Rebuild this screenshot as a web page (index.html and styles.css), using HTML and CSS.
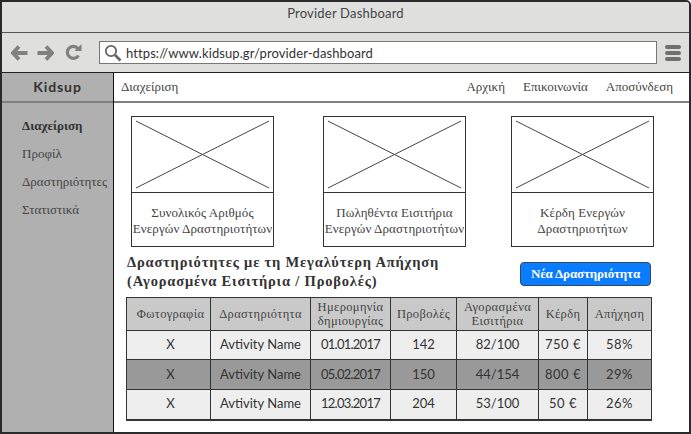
FILE: index.html
```html
<!DOCTYPE html>
<html lang="el">
<head>
<meta charset="utf-8">
<title>Provider Dashboard</title>
<link rel="stylesheet" href="styles.css">
</head>
<body>
<div class="frame">
  <div class="titlebar">Provider Dashboard</div>
  <div class="toolbar">
    <svg class="nav-icon back" width="17" height="16" viewBox="0 0 17 16"><path d="M8 1.500 2 8 8 14.500" fill="none" stroke="#808080" stroke-width="3.800"/><path d="M3 8H16.500" fill="none" stroke="#808080" stroke-width="4"/></svg>
    <svg class="nav-icon fwd" width="17" height="16" viewBox="0 0 17 16"><path d="M9 1.500 15 8 9 14.500" fill="none" stroke="#808080" stroke-width="3.800"/><path d="M14 8H.5" fill="none" stroke="#808080" stroke-width="4"/></svg>
    <svg class="nav-icon reload" width="17" height="17" viewBox="0 0 17 17"><path d="M13.500 11.500A6 6 0 1 1 13 4.500" fill="none" stroke="#808080" stroke-width="3.200"/><path d="M9.500 7H16.500V0Z" fill="#808080"/></svg>
    <div class="urlbar">
      <svg class="search" width="18" height="18" viewBox="0 0 18 18"><circle cx="7" cy="7" r="5.200" fill="none" stroke="#666" stroke-width="1.800"/><path d="M11 11 16.500 16.500" stroke="#666" stroke-width="2.600"/></svg>
      <span class="url">https://www.kidsup.gr/provider-dashboard</span>
    </div>
    <div class="burger"><i></i><i></i><i></i></div>
  </div>
  <div class="app">
    <aside class="sidebar">
      <div class="brand">Kidsup</div>
      <ul class="side-menu">
        <li class="active">Διαχείριση</li>
        <li>Προφίλ</li>
        <li>Δραστηριότητες</li>
        <li>Στατιστικά</li>
      </ul>
    </aside>
    <main class="main">
      <nav class="topnav">
        <span class="topnav-title">Διαχείριση</span>
        <span class="topnav-links"><a>Αρχική</a><a>Επικοινωνία</a><a>Αποσύνδεση</a></span>
      </nav>
      <section class="cards">
        <article class="card">
          <svg class="ph" viewBox="0 0 142 75" preserveAspectRatio="none"><path d="M4 4 138 71M138 4 4 71" stroke="#444" stroke-width="1" fill="none"/></svg>
          <p>Συνολικός Αριθμός<br>Ενεργών Δραστηριοτήτων</p>
        </article>
        <article class="card card-second">
          <svg class="ph" viewBox="0 0 142 75" preserveAspectRatio="none"><path d="M4 4 138 71M138 4 4 71" stroke="#444" stroke-width="1" fill="none"/></svg>
          <p>Πωληθέντα Εισιτήρια<br>Ενεργών Δραστηριοτήτων</p>
        </article>
        <article class="card card-third">
          <svg class="ph" viewBox="0 0 142 75" preserveAspectRatio="none"><path d="M4 4 138 71M138 4 4 71" stroke="#444" stroke-width="1" fill="none"/></svg>
          <p>Κέρδη Ενεργών<br>Δραστηριοτήτων</p>
        </article>
      </section>
      <section class="head-row">
        <h2>Δραστηριότητες με τη Μεγαλύτερη Απήχηση<br>(Αγορασμένα Εισιτήρια / Προβολές)</h2>
        <button class="cta">Νέα Δραστηριότητα</button>
      </section>
      <table class="grid">
        <colgroup>
          <col class="c1"><col class="c2"><col class="c3"><col class="c4"><col class="c5"><col class="c6"><col class="c7">
        </colgroup>
        <thead>
          <tr><th class="photo">Φωτογραφία</th><th>Δραστηριότητα</th><th>Ημερομηνία<br>δημιουργίας</th><th>Προβολές</th><th>Αγορασμένα<br>Εισιτήρια</th><th>Κέρδη</th><th>Απήχηση</th></tr>
        </thead>
        <tbody>
          <tr><td class="photo">X</td><td>Avtivity Name</td><td class="date">01.01.2017</td><td>142</td><td>82/100</td><td class="wide">750 €</td><td class="wide">58%</td></tr>
          <tr class="dark"><td class="photo">X</td><td>Avtivity Name</td><td class="date">05.02.2017</td><td>150</td><td>44/154</td><td class="wide">800 €</td><td class="wide">29%</td></tr>
          <tr><td class="photo">X</td><td>Avtivity Name</td><td class="date">12.03.2017</td><td>204</td><td>53/100</td><td class="wide">50 €</td><td class="wide">26%</td></tr>
        </tbody>
      </table>
    </main>
  </div>
</div>
</body>
</html>
```
FILE: styles.css
```css
* { box-sizing: border-box; }
html, body { margin: 0; padding: 0; background: #fff; }
body { width: 691px; height: 434px; overflow: hidden; font-family: "Lato", "Liberation Serif", serif; color: #333; }
.frame { width: 691px; height: 434px; border: 2px solid #2a2a2a; border-top-right-radius: 5px; display: flex; flex-direction: column; overflow: hidden; }
.titlebar { height: 31px; flex: none; background: #dfdfdd; border-bottom: 1px solid #555; text-align: center; font-size: 13px; line-height: 23px; letter-spacing: .2px; color: #444; }
.toolbar { height: 40px; flex: none; background: #dfdfdd; border-bottom: 1px solid #222; display: flex; align-items: center; padding: 0 0 0 9px; }
.nav-icon { display: block; flex: none; }
.fwd { margin-left: 9px; }
.reload { margin-left: 11px; }
.urlbar { width: 558px; height: 23px; margin-left: 17px; flex: none; background: #fff; border: 1px solid #777; display: flex; align-items: center; padding-left: 4px; }
.search { flex: none; }
.url { font-size: 13px; letter-spacing: .09px; margin-left: 4px; color: #333; white-space: nowrap; }
.burger { margin-left: 8px; display: flex; flex-direction: column; gap: 2px; }
.burger i { display: block; width: 16px; height: 4px; border-radius: 2px; background: #707070; }
.app { flex: 1; display: flex; min-height: 0; }
.sidebar { width: 112px; flex: none; background: #b0b0b0; border-right: 1px solid #111; }
.brand { height: 30px; border-bottom: 2px solid #808080; text-align: center; font-size: 14px; font-weight: 700; letter-spacing: .9px; line-height: 28px; color: #333; }
.side-menu { list-style: none; margin: 0; padding: 9px 0 0 20px; font-family: "Liberation Serif", serif; font-size: 13px; color: #444; }
.side-menu li { height: 28px; line-height: 28px; white-space: nowrap; }
.side-menu .active { font-weight: 700; color: #333; }
.main { flex: 1; min-width: 0; background: #fff; }
.topnav { height: 30px; border-bottom: 2px solid #808080; display: flex; justify-content: space-between; align-items: center; padding: 0 16px 0 7px; font-family: "Liberation Serif", serif; font-size: 13px; color: #444; }
.topnav-links { display: flex; gap: 18px; }
.cards { display: flex; padding: 13px 0 0 17px; }
.card { width: 143px; height: 131px; border: 1px solid #333; flex: none; }
.card-second { margin-left: 49px; }
.card-third { margin-left: 45px; }
.ph { display: block; width: 141px; height: 76px; border-bottom: 1px solid #333; }
.card p { margin: 12px 0 0; text-align: center; font-family: "Liberation Serif", serif; font-size: 13px; line-height: 16px; letter-spacing: .1px; color: #444; white-space: nowrap; }
.head-row { display: flex; justify-content: space-between; padding: 6px 38px 0 13px; height: 50px; }
.head-row h2 { margin: 0; font-family: "Liberation Serif", serif; font-size: 14.500px; line-height: 19px; font-weight: 700; letter-spacing: .82px; color: #333; white-space: nowrap; }
.cta { width: 131px; height: 24px; margin-top: 9px; background: #0a7cff; border: 1px solid #33475f; border-radius: 4px; color: #fff; font-family: "Liberation Serif", serif; font-size: 13px; font-weight: 700; letter-spacing: -.15px; padding: 0; }
.grid { width: 525px; margin-left: 12px; border-collapse: collapse; table-layout: fixed; color: #333; font-size: 13px; border-bottom: 2px solid #333; }
.c1 { width: 84px; } .c2 { width: 100px; } .c3 { width: 80px; } .c4 { width: 66px; } .c5 { width: 82px; } .c6 { width: 49px; } .c7 { width: 64px; }
.grid th, .grid td { border: 1px solid #333; text-align: center; white-space: nowrap; }
.grid th { height: 33px; padding: 0; background: #c9c9c9; font-family: "Liberation Serif", serif; font-weight: 400; font-size: 12.500px; line-height: 14px; letter-spacing: .35px; color: #444; }
.grid td { height: 30px; padding: 0 0 2px; background: #eee; }
.grid tbody tr:first-child td { height: 29px; }
.grid .photo { padding-left: 4px; }
.grid .date { letter-spacing: -.75px; }
.grid .wide { letter-spacing: .55px; }
.grid .dark td { background: #999; }
```
